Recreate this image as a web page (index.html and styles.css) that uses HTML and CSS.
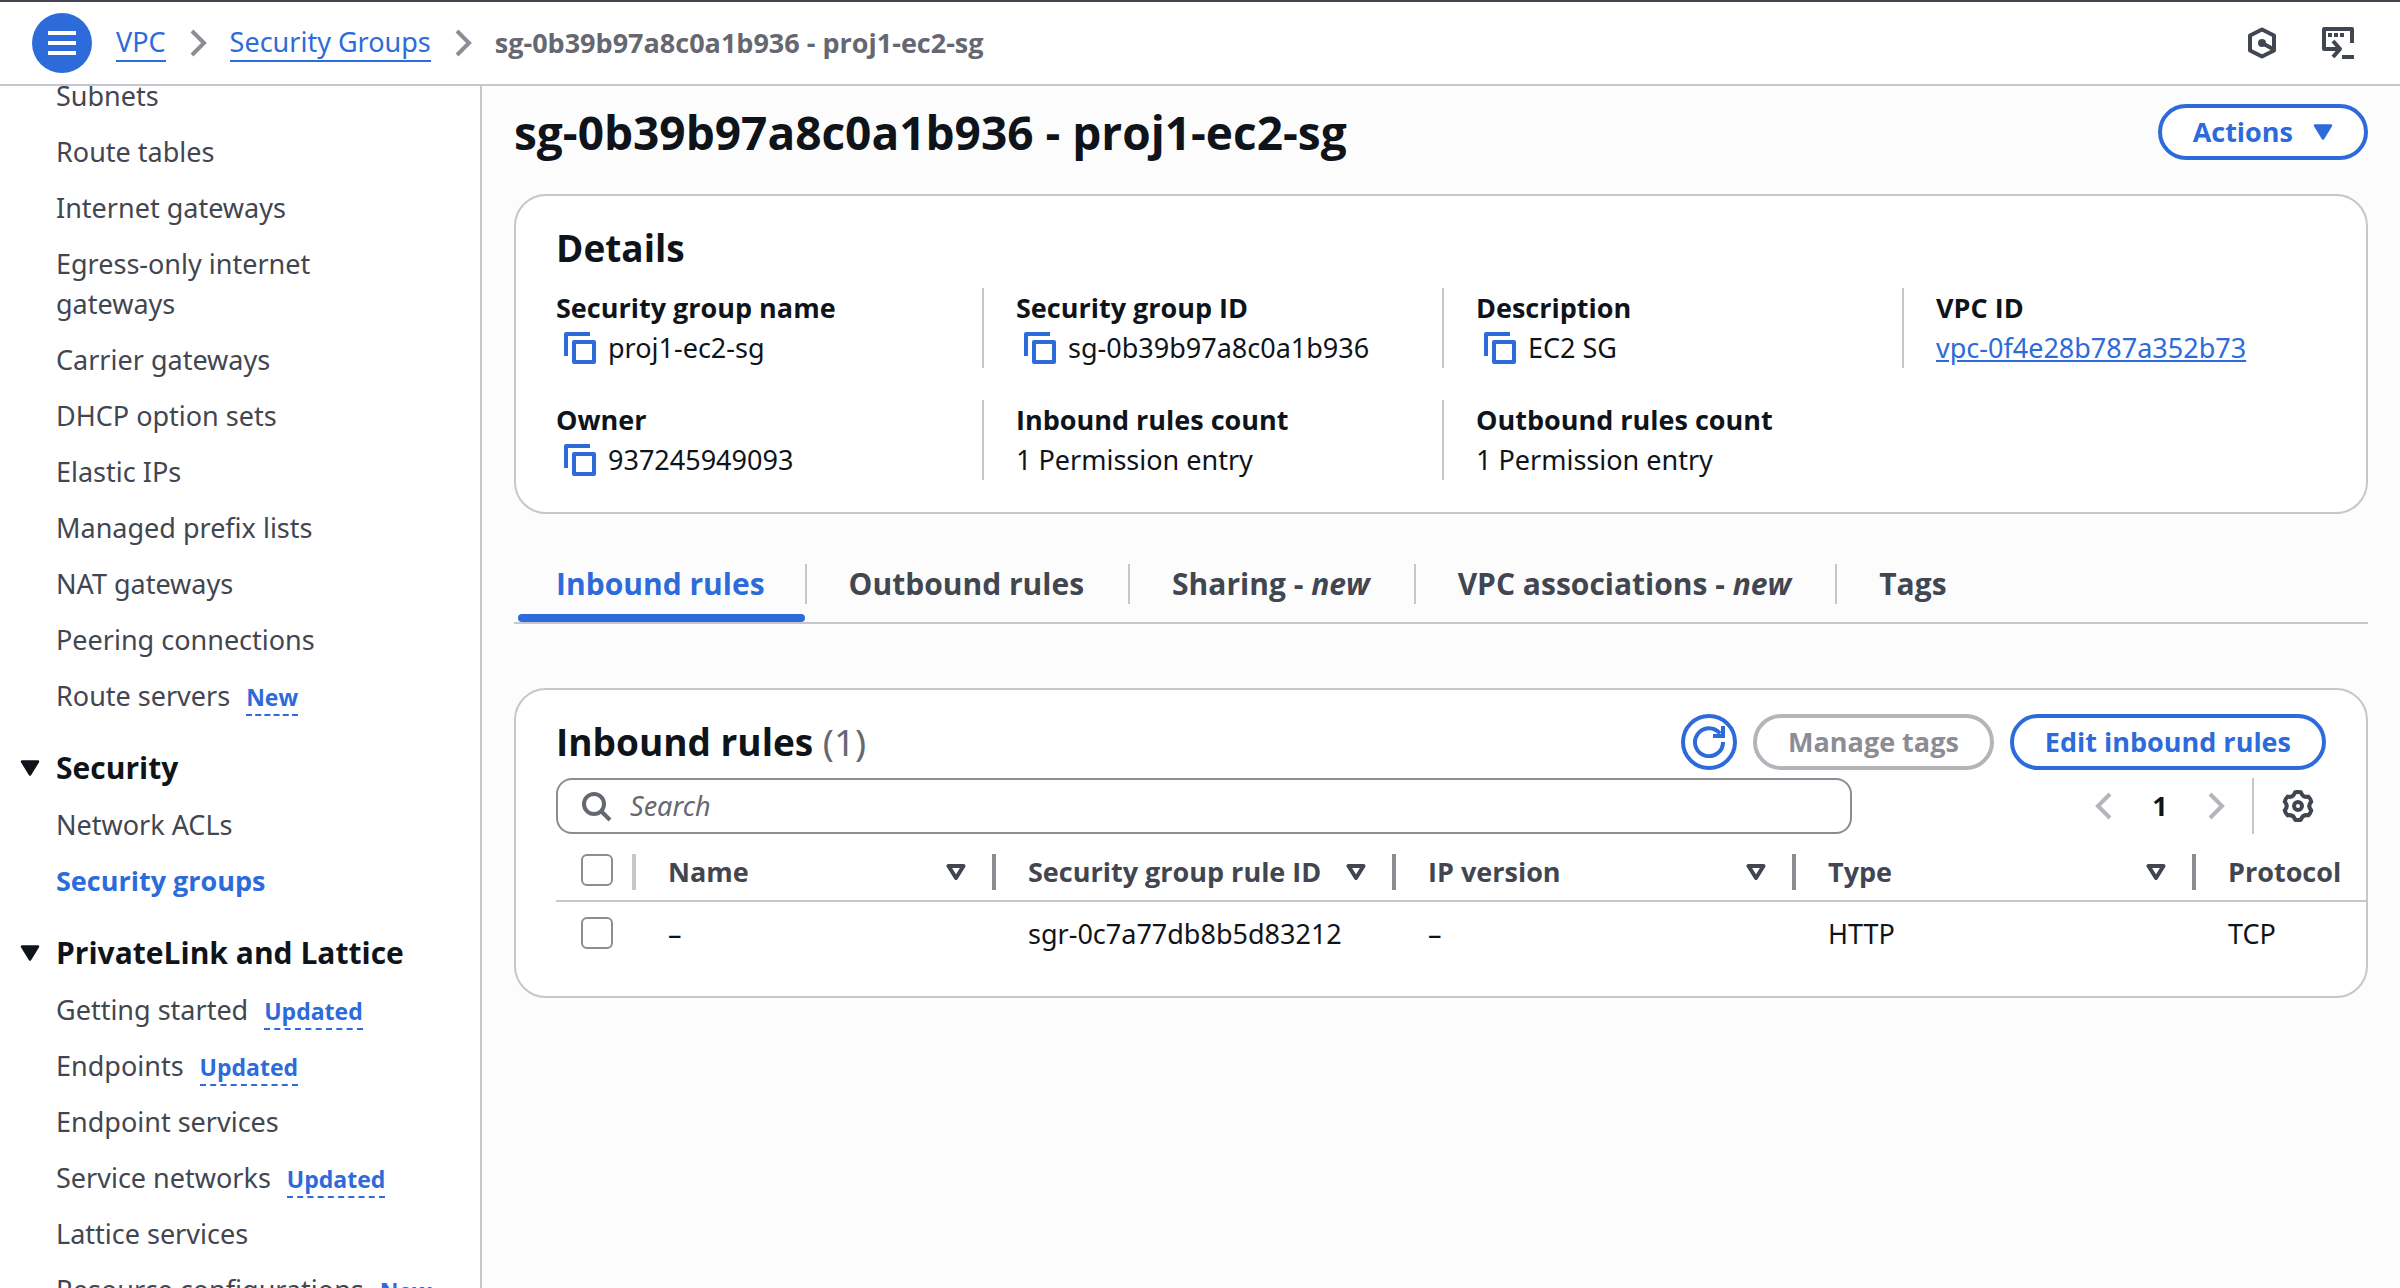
FILE: index.html
```html
<!DOCTYPE html>
<html lang="en">
<head>
<meta charset="utf-8">
<title>Security group details | VPC</title>
<link rel="stylesheet" href="styles.css">
</head>
<body>
<svg class="sprite" aria-hidden="true">
  <symbol id="copy" viewBox="0 0 32 32"><path d="M2 24V2h24M10 10h20v20H10z" fill="none" stroke="currentColor" stroke-width="4" stroke-linejoin="round"/></symbol>
  <symbol id="chevron" viewBox="0 0 32 32"><path d="M10 4l12 12-12 12" fill="none" stroke="currentColor" stroke-width="4"/></symbol>
  <symbol id="caret" viewBox="0 0 20 16"><path d="M2 1.500h16L10 14.500z" fill="currentColor" stroke="currentColor" stroke-width="2.500" stroke-linejoin="round"/></symbol>
  <symbol id="sort" viewBox="0 0 20 16"><path d="M2.500 2h15L10 14z" fill="none" stroke="currentColor" stroke-width="4" stroke-linejoin="round"/></symbol>
</svg>

<header class="topbar">
  <button class="menu" type="button" aria-label="Open navigation">
    <svg viewBox="0 0 28 24" width="28" height="24"><path d="M0 2h28M0 12h28M0 22h28" stroke="currentColor" stroke-width="4"/></svg>
  </button>
  <nav class="crumbs" aria-label="Breadcrumbs">
    <a href="#vpc">VPC</a>
    <svg class="icon"><use href="#chevron"/></svg>
    <a href="#groups">Security Groups</a>
    <svg class="icon"><use href="#chevron"/></svg>
    <span class="current">sg-0b39b97a8c0a1b936 - proj1-ec2-sg</span>
  </nav>
  <div class="tools">
    <button type="button" aria-label="Assistant">
      <svg viewBox="0 0 32 32" class="icon"><path d="M16 2.500l12 6v15l-12 6-12-6v-15z" fill="none" stroke="currentColor" stroke-width="4" stroke-linejoin="round"/><circle cx="16" cy="16" r="4" fill="currentColor"/><path d="M16 16l11 6" stroke="currentColor" stroke-width="4"/></svg>
    </button>
    <button type="button" aria-label="CloudShell">
      <svg viewBox="0 0 32 32" class="icon"><path d="M30 16V2H2v20h16M11 14l7 8-7 8" fill="none" stroke="currentColor" stroke-width="4" stroke-linejoin="round"/><path d="M6 8h4M12 8h4M18 8h4" stroke="currentColor" stroke-width="4"/><path d="M20 30h12" stroke="currentColor" stroke-width="4"/></svg>
    </button>
  </div>
</header>

<div class="shell">
  <nav class="side" aria-label="VPC">
    <ul class="links">
      <li><a href="#a">Subnets</a></li>
      <li><a href="#a">Route tables</a></li>
      <li><a href="#a">Internet gateways</a></li>
      <li><a href="#a">Egress-only internet gateways</a></li>
      <li><a href="#a">Carrier gateways</a></li>
      <li><a href="#a">DHCP option sets</a></li>
      <li><a href="#a">Elastic IPs</a></li>
      <li><a href="#a">Managed prefix lists</a></li>
      <li><a href="#a">NAT gateways</a></li>
      <li><a href="#a">Peering connections</a></li>
      <li><a href="#a">Route servers</a><button class="note" type="button">New</button></li>
    </ul>
    <button class="section" type="button" aria-expanded="true"><svg class="caret"><use href="#caret"/></svg>Security</button>
    <ul class="links">
      <li><a href="#a">Network ACLs</a></li>
      <li><a href="#a" class="active">Security groups</a></li>
    </ul>
    <button class="section" type="button" aria-expanded="true"><svg class="caret"><use href="#caret"/></svg>PrivateLink and Lattice</button>
    <ul class="links">
      <li><a href="#a">Getting started</a><button class="note" type="button">Updated</button></li>
      <li><a href="#a">Endpoints</a><button class="note" type="button">Updated</button></li>
      <li><a href="#a">Endpoint services</a></li>
      <li><a href="#a">Service networks</a><button class="note" type="button">Updated</button></li>
      <li><a href="#a">Lattice services</a></li>
      <li><a href="#a">Resource configurations</a><button class="note" type="button">New</button></li>
    </ul>
  </nav>

  <main class="main">
    <div class="title">
      <h1>sg-0b39b97a8c0a1b936 - proj1-ec2-sg</h1>
      <button class="btn" type="button">Actions<svg class="caret"><use href="#caret"/></svg></button>
    </div>

    <section class="card">
      <h2>Details</h2>
      <dl class="facts">
        <div><dt>Security group name</dt><dd><button class="copy" type="button" aria-label="Copy name"><svg class="icon"><use href="#copy"/></svg></button>proj1-ec2-sg</dd></div>
        <div><dt>Security group ID</dt><dd><button class="copy" type="button" aria-label="Copy ID"><svg class="icon"><use href="#copy"/></svg></button>sg-0b39b97a8c0a1b936</dd></div>
        <div><dt>Description</dt><dd><button class="copy" type="button" aria-label="Copy description"><svg class="icon"><use href="#copy"/></svg></button>EC2 SG</dd></div>
        <div><dt>VPC ID</dt><dd><a href="#vpc">vpc-0f4e28b787a352b73</a></dd></div>
        <div><dt>Owner</dt><dd><button class="copy" type="button" aria-label="Copy owner"><svg class="icon"><use href="#copy"/></svg></button>937245949093</dd></div>
        <div><dt>Inbound rules count</dt><dd>1 Permission entry</dd></div>
        <div><dt>Outbound rules count</dt><dd>1 Permission entry</dd></div>
      </dl>
    </section>

    <div class="tabs" role="tablist">
      <button type="button" role="tab" aria-selected="true">Inbound rules</button>
      <button type="button" role="tab" aria-selected="false">Outbound rules</button>
      <button type="button" role="tab" aria-selected="false">Sharing - <i>new</i></button>
      <button type="button" role="tab" aria-selected="false">VPC associations - <i>new</i></button>
      <button type="button" role="tab" aria-selected="false">Tags</button>
    </div>

    <section class="card rules">
      <div class="head">
        <h2>Inbound rules <span class="count">(1)</span></h2>
        <button class="btn round" type="button" aria-label="Refresh">
          <svg viewBox="0 0 32 32" class="icon"><path d="M30 16A14 14 0 1 1 27 7.500" fill="none" stroke="currentColor" stroke-width="4"/><path d="M30 0v10H20" fill="none" stroke="currentColor" stroke-width="4"/></svg>
        </button>
        <button class="btn" type="button" disabled>Manage tags</button>
        <button class="btn" type="button">Edit inbound rules</button>
      </div>
      <div class="filter">
        <label class="search">
          <svg viewBox="0 0 32 32" class="icon"><circle cx="12" cy="14" r="10" fill="none" stroke="currentColor" stroke-width="4"/><path d="M19 21l9 9" stroke="currentColor" stroke-width="4"/></svg>
          <input type="text" placeholder="Search" aria-label="Search rules">
        </label>
        <div class="pages">
          <button type="button" class="step" disabled aria-label="Previous page"><svg class="icon flip"><use href="#chevron"/></svg></button>
          <button type="button" class="page">1</button>
          <button type="button" class="step" disabled aria-label="Next page"><svg class="icon"><use href="#chevron"/></svg></button>
        </div>
        <button class="gear" type="button" aria-label="Preferences">
          <svg viewBox="0 0 32 32" class="icon"><path d="M13.100 2.300Q16 1.500 18.900 2.300Q20.600 8 26.400 6.600Q28.600 8.700 29.300 11.700Q25.200 16 29.300 20.300Q28.600 23.300 26.400 25.400Q20.600 24 18.900 29.700Q16 30.500 13.100 29.700Q11.400 24 5.600 25.400Q3.400 23.300 2.700 20.300Q6.800 16 2.700 11.700Q3.400 8.700 5.600 6.600Q11.400 8 13.100 2.300z" fill="none" stroke="currentColor" stroke-width="4" stroke-linejoin="round"/><circle cx="16" cy="16" r="4" fill="none" stroke="currentColor" stroke-width="4"/></svg>
        </button>
      </div>
      <div class="scroll">
        <table>
          <colgroup><col class="c-pick"><col class="c-name"><col><col><col><col></colgroup>
          <thead>
            <tr>
              <th><div class="cell pick"><input type="checkbox" aria-label="Select all"></div></th>
              <th><div class="cell">Name<svg class="caret"><use href="#sort"/></svg></div></th>
              <th><div class="cell">Security group rule ID<svg class="caret"><use href="#sort"/></svg></div></th>
              <th><div class="cell">IP version<svg class="caret"><use href="#sort"/></svg></div></th>
              <th><div class="cell">Type<svg class="caret"><use href="#sort"/></svg></div></th>
              <th><div class="cell">Protocol<svg class="caret"><use href="#sort"/></svg></div></th>
            </tr>
          </thead>
          <tbody>
            <tr>
              <td class="tick"><input type="checkbox" aria-label="Select rule"></td>
              <td>–</td>
              <td>sgr-0c7a77db8b5d83212</td>
              <td>–</td>
              <td>HTTP</td>
              <td>TCP</td>
            </tr>
          </tbody>
        </table>
      </div>
    </section>
  </main>
</div>
</body>
</html>
```
FILE: styles.css
```css
:root {
  --blue: #2d6bdb;
  --ink: #0f141a;
  --text: #424650;
  --muted: #656871;
  --line: #c6c6cd;
  --edge: #8c8c94;
}
* { box-sizing: border-box; }
body {
  margin: 0;
  height: 100vh;
  display: flex;
  flex-direction: column;
  overflow: hidden;
  background: #fff;
  color: var(--ink);
  font: 27px/40px "Noto Sans", "Open Sans", sans-serif;
}
button, input { font: inherit; color: inherit; }
button { background: none; border: 0; padding: 0; }
a { color: var(--blue); }
h1, h2, dl, dd, ul { margin: 0; padding: 0; }
ul { list-style: none; }
svg { display: block; flex: none; }
.sprite { width: 0; height: 0; position: absolute; }
.icon { width: 32px; height: 32px; }
.caret { width: 20px; height: 16px; }

.topbar {
  display: flex;
  align-items: center;
  gap: 24px;
  flex: none;
  height: 86px;
  padding: 0 46px 0 32px;
  border-top: 2px solid var(--text);
  border-bottom: 2px solid var(--line);
}
.menu {
  display: grid;
  place-items: center;
  width: 60px;
  height: 60px;
  border-radius: 50%;
  background: var(--blue);
  color: #fff;
}
.crumbs { display: flex; align-items: center; gap: 16px; flex: 1; }
.crumbs a {
  text-decoration: none;
  line-height: 36px;
  border-bottom: 2px solid;
}
.crumbs .icon { color: var(--edge); }
.crumbs .current { color: var(--muted); }
.tools { display: flex; gap: 44px; color: var(--text); }

.shell { display: flex; flex: 1; min-height: 0; }
.side {
  flex: none;
  width: 482px;
  padding: 0 52px 0 20px;
  border-right: 2px solid var(--line);
  overflow: hidden;
}
.links {
  display: flex;
  flex-direction: column;
  gap: 16px;
  padding-left: 36px;
}
.links:first-child { margin-top: -10px; }
.links li { display: flex; align-items: baseline; gap: 16px; }
.links a { color: var(--text); text-decoration: none; }
.links li:has(.note) { white-space: nowrap; }
.links a.active, .crumbs .current, .btn, dt, th, h1, h2, .section, .note, .tabs button, .page {
  font-family: "Open Sans", "Noto Sans", sans-serif;
  font-weight: 700;
}
.links a.active { color: var(--blue); }
.note {
  flex: none;
  padding-bottom: 2px;
  color: var(--blue);
  font-size: 23px;
  line-height: 30px;
  border-bottom: 2px dashed;
}
.section {
  display: flex;
  align-items: center;
  gap: 16px;
  margin: 32px 0 17px;
  font-size: 30px;
  white-space: nowrap;
}

.main {
  flex: 1;
  min-width: 0;
  padding: 18px 32px;
  background: #fcfcfd;
}
.title {
  display: flex;
  align-items: center;
  justify-content: space-between;
  margin-bottom: 34px;
}
h1 { font-size: 46px; line-height: 56px; }
h2 { font-size: 37px; line-height: 48px; }
.btn {
  display: flex;
  align-items: center;
  justify-content: center;
  gap: 20px;
  height: 56px;
  padding: 0 31px;
  border: 4px solid;
  border-radius: 28px;
  background: #fff;
  color: var(--blue);
}
.btn:disabled { color: var(--edge); border-color: #b4b4bb; }
.btn.round { width: 56px; padding: 0; }

.card {
  border: 2px solid var(--line);
  border-radius: 32px;
  background: #fff;
  padding: 28px 40px 32px;
}
.facts {
  display: grid;
  grid-template-columns: repeat(4, 1fr);
  row-gap: 32px;
  margin: 16px -36px 0 -34px;
}
.facts div { padding-left: 32px; border-left: 2px solid var(--line); }
.facts div:nth-child(4n + 1) { border-color: transparent; }
.facts dd { display: flex; align-items: center; }
.copy { color: var(--blue); margin: 0 12px 0 8px; }

.tabs {
  display: flex;
  margin-top: 40px;
  border-bottom: 2px solid var(--line);
}
.tabs button {
  position: relative;
  padding: 10px 44px 18px;
  color: var(--text);
  font-size: 30px;
  line-height: 40px;
}
.tabs button:first-child { padding-right: 40px; padding-left: 42px; }
.tabs button + button::before {
  content: "";
  position: absolute;
  top: 10px;
  left: 0;
  width: 2px;
  height: 40px;
  background: var(--line);
}
.tabs [aria-selected="true"] { color: var(--blue); }
.tabs [aria-selected="true"]::after {
  content: "";
  position: absolute;
  inset: auto 0 0 4px;
  height: 8px;
  border-radius: 4px;
  background: var(--blue);
}

.rules { margin-top: 64px; padding: 24px 0 32px 40px; }
.head { display: flex; align-items: center; gap: 16px; padding-right: 40px; }
.head h2 { flex: 1; }
.count { font-family: "Noto Sans", sans-serif; font-weight: 400; color: var(--muted); }
.filter {
  display: flex;
  align-items: center;
  margin-top: 8px;
  padding-right: 40px;
}
.search {
  display: flex;
  align-items: center;
  gap: 16px;
  flex: 1;
  height: 56px;
  padding: 0 24px;
  border: 2px solid var(--edge);
  border-radius: 16px;
  color: var(--muted);
}
.search input { flex: 1; border: 0; padding: 0; outline: 0; background: none; }
.search input::placeholder { color: var(--muted); font-style: italic; opacity: 1; }
.pages { display: flex; align-items: center; gap: 16px; margin-left: 236px; }
.page { width: 48px; }
.step { color: #b4b4bb; }
.flip { transform: scaleX(-1); }
.gear {
  height: 56px;
  margin-left: 20px;
  padding: 0 12px 0 28px;
  border-left: 2px solid var(--line);
  color: var(--text);
}

.scroll { overflow: hidden; margin-top: 8px; }
table { table-layout: fixed; width: 2040px; border-collapse: collapse; }
.c-pick { width: 80px; }
.c-name { width: 360px; }
th { padding: 12px 0 10px; border-bottom: 2px solid var(--line); text-align: left; color: var(--text); }
.cell {
  display: flex;
  align-items: center;
  justify-content: space-between;
  height: 36px;
  padding: 0 26px 0 32px;
  border-right: 4px solid var(--edge);
}
.cell.pick { align-items: flex-start; padding: 0 0 0 25px; border-color: var(--line); }
td { padding: 12px 32px 10px; }
td.tick { padding: 0 0 0 25px; }
input[type="checkbox"] {
  appearance: none;
  display: block;
  width: 32px;
  height: 32px;
  margin: 0;
  border: 2px solid var(--edge);
  border-radius: 6px;
  background: #fff;
}
```
